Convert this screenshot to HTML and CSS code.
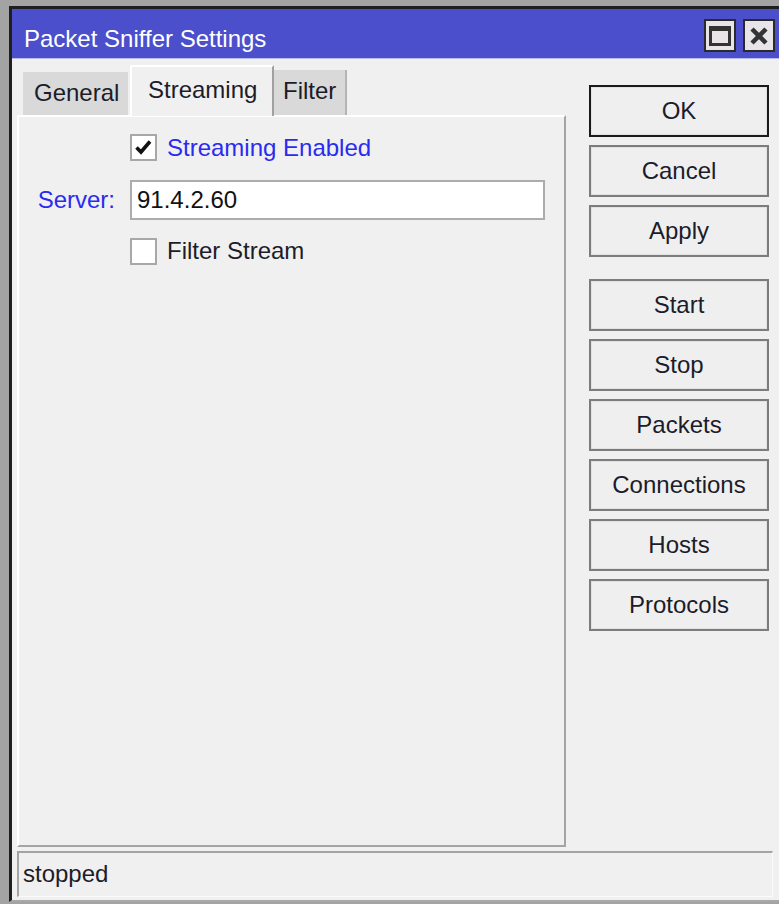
FILE: index.html
```html
<!DOCTYPE html>
<html>
<head>
<meta charset="utf-8">
<title>Packet Sniffer Settings</title>
<link rel="stylesheet" href="styles.css">
</head>
<body>
<div class="window">
  <div class="titlebar">
    <span class="title">Packet Sniffer Settings</span>
    <div class="title-buttons">
      <span class="tbtn">
        <svg width="22" height="20" viewBox="0 0 22 20"><rect x="1.5" y="1.5" width="19" height="17" fill="none" stroke="#333" stroke-width="3"/><rect x="1" y="1" width="20" height="4" fill="#333"/></svg>
      </span>
      <span class="tbtn">
        <svg width="20" height="20" viewBox="0 0 20 20"><path d="M3 3 L17 17 M17 3 L3 17" stroke="#333" stroke-width="4.5"/></svg>
      </span>
    </div>
  </div>
  <div class="body">
    <div class="main">
      <div class="tabs">
        <div class="tab tab-general">General</div>
        <div class="tab tab-active">Streaming</div>
        <div class="tab tab-filter">Filter</div>
      </div>
      <div class="panel">
        <div class="form">
          <div class="row row-check">
            <span class="cell-label"></span>
            <label class="check">
              <span class="box"><svg width="23" height="23" viewBox="0 0 23 23"><path d="M4.5 11.5 L9 16 L18 5.5" fill="none" stroke="#111" stroke-width="3.6"/></svg></span>
              <span class="check-text blue">Streaming Enabled</span>
            </label>
          </div>
          <div class="row row-input">
            <span class="cell-label blue">Server:</span>
            <div class="input">91.4.2.60</div>
          </div>
          <div class="row row-check2">
            <span class="cell-label"></span>
            <label class="check">
              <span class="box"></span>
              <span class="check-text">Filter Stream</span>
            </label>
          </div>
        </div>
      </div>
    </div>
    <div class="side">
      <div class="btn btn-default">OK</div>
      <div class="btn">Cancel</div>
      <div class="btn">Apply</div>
      <div class="btn btn-group">Start</div>
      <div class="btn">Stop</div>
      <div class="btn">Packets</div>
      <div class="btn">Connections</div>
      <div class="btn">Hosts</div>
      <div class="btn">Protocols</div>
    </div>
  </div>
  <div class="status">stopped</div>
</div>
</body>
</html>
```
FILE: styles.css
```css
html, body {
  margin: 0;
  padding: 0;
}

body {
  background: #a3a3a3;
  overflow: hidden;
  height: 904px;
  font-family: "Liberation Sans", Arial, sans-serif;
  font-size: 24px;
  color: #1c1c2a;
}

.window {
  margin: 6px 0 0 9px;
  width: 780px;
  height: 896px;
  border-top: 3px solid #1f1f1f;
  border-left: 3px solid #1f1f1f;
  border-bottom: 2px solid #a8a8a8;
  background: #f0f0f0;
  box-sizing: border-box;
}

.titlebar {
  height: 49px;
  background: #4b4fcb;
  border-bottom: 1px solid #b9bbee;
  display: flex;
  align-items: flex-start;
  padding: 0 0 0 12px;
}

.title {
  color: #fff;
  font-size: 24px;
  line-height: 49px;
  padding-top: 5px;
}

.title-buttons {
  margin-left: auto;
  margin-right: 14px;
  display: flex;
  gap: 7px;
  padding-top: 10px;
}

.tbtn {
  width: 32px;
  height: 33px;
  box-sizing: border-box;
  border: 2px solid #2a2a2a;
  background: #e8e4e8;
  display: flex;
  align-items: center;
  justify-content: center;
}

.body {
  display: flex;
  padding: 5px 0 0 5px;
}

.main {
  width: 549px;
}

.tabs {
  height: 51px;
  display: flex;
  align-items: flex-end;
  padding-left: 6px;
}

.tab {
  box-sizing: border-box;
  background: #d9d9d9;
  line-height: 42px;
  padding: 0 11px;
  color: #1c1c2a;
}

.tab-general {
  height: 43px;
  width: 105px;
  margin-right: 2px;
}

.tab-active {
  height: 51px;
  width: 144px;
  background: #f0f0f0;
  border-top: 2px solid #fff;
  border-left: 2px solid #fff;
  border-right: 2px solid #a0a0a0;
  line-height: 46px;
  padding-left: 16px;
  position: relative;
  z-index: 1;
  margin-bottom: -1px;
}

.tab-filter {
  height: 45px;
  width: 73px;
  border-right: 2px solid #b4b4b4;
  padding-left: 9px;
}

.panel {
  height: 732px;
  box-sizing: border-box;
  border-top: 2px solid #fff;
  border-left: 2px solid #fff;
  border-right: 2px solid #a4a4a4;
  border-bottom: 2px solid #a4a4a4;
}

.form {
  padding-top: 17px;
}

.row {
  display: flex;
  align-items: center;
}

.cell-label {
  width: 111px;
  box-sizing: border-box;
  text-align: right;
  padding-right: 15px;
  flex: none;
}

.blue {
  color: #2b2bf0;
}

.check {
  display: flex;
  align-items: center;
  gap: 10px;
}

.box {
  width: 27px;
  height: 27px;
  box-sizing: border-box;
  border: 2px solid #a8a8a8;
  background: #fff;
  display: flex;
  align-items: center;
  justify-content: center;
}

.row-check {
  height: 27px;
}

.row-input {
  margin-top: 19px;
}

.input {
  width: 415px;
  height: 40px;
  box-sizing: border-box;
  border: 2px solid #acacac;
  background: #fff;
  padding-left: 5px;
  line-height: 36px;
  color: #111;
}

.row-check2 {
  margin-top: 17px;
}

.side {
  margin-left: 23px;
  width: 180px;
  padding-top: 21px;
  display: flex;
  flex-direction: column;
  gap: 8px;
}

.btn {
  height: 52px;
  box-sizing: border-box;
  border: 2px solid #7c7c7c;
  box-shadow: inset 0 0 0 1px #e2e2e2;
  background: #efefef;
  text-align: center;
  line-height: 48px;
  color: #1c1c2a;
}

.btn-default {
  border-color: #1a1a1a;
}

.btn-group {
  margin-top: 14px;
}

.status {
  margin: 4px 0 0 5px;
  width: 756px;
  height: 46px;
  box-sizing: border-box;
  border-top: 2px solid #a4a4a4;
  border-left: 2px solid #a4a4a4;
  border-right: 1px solid #fbfbfb;
  border-bottom: 1px solid #fbfbfb;
  padding-left: 4px;
  line-height: 42px;
  color: #1c1c2a;
}
```
